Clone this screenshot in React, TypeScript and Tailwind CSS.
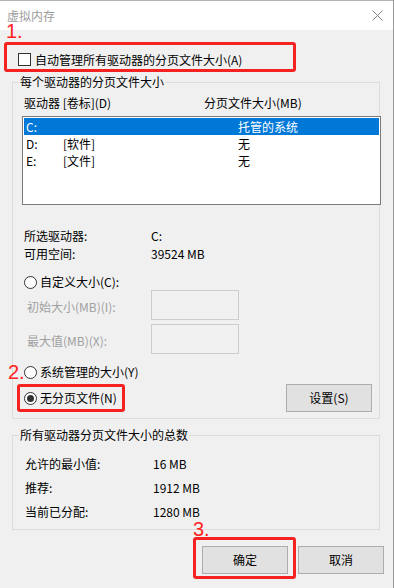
function Checkbox() {
  return <span className="block h-[13px] w-[13px] border border-[#333] bg-white" />
}

function Radio({ checked = false }: { checked?: boolean }) {
  return (
    <span className="flex h-[13px] w-[13px] items-center justify-center rounded-full border border-[#333] bg-white">
      {checked && <span className="h-[7px] w-[7px] rounded-full bg-[#333]" />}
    </span>
  )
}

function Button({ label }: { label: string }) {
  return (
    <button
      type="button"
      className="flex h-[28px] w-[86px] items-center justify-center border border-[#adadad] bg-[#e1e1e1] text-black"
    >
      {label}
    </button>
  )
}

function Legend({ label }: { label: string }) {
  return (
    <div className="-mt-[9px] h-[16px] pl-[6px]">
      <span className="bg-[#f0f0f0] px-[1px]">{label}</span>
    </div>
  )
}

const drives = [
  { letter: 'C:', label: '', size: '托管的系统', selected: true },
  { letter: 'D:', label: '[软件]', size: '无', selected: false },
  { letter: 'E:', label: '[文件]', size: '无', selected: false },
]

const totals = [
  ['允许的最小值:', '16 MB'],
  ['推荐:', '1912 MB'],
  ['当前已分配:', '1280 MB'],
]

export default function App() {
  return (
    <div className="relative h-[588px] w-[394px] overflow-hidden border-r border-[#9a9a9a] bg-[#f0f0f0] font-['Noto_Sans_CJK_SC',sans-serif] text-[12px] leading-[16px] text-black">
      {/* title bar */}
      <div className="flex h-[30px] items-center justify-between border-t border-[#b4b4b4] bg-white pl-[7px] pr-[10px]">
        <span className="leading-[14px] text-[#9b9b9b]">虚拟内存</span>
        <svg width="11" height="11" viewBox="0 0 11 11" className="text-[#808080]">
          <path d="M0.5 0.5L10.5 10.5M10.5 0.5L0.5 10.5" stroke="currentColor" strokeWidth="1" />
        </svg>
      </div>

      <div className="ml-[18px] mt-[23px] flex h-[13px] items-center gap-[4px]">
        <Checkbox />
        <span>自动管理所有驱动器的分页文件大小(A)</span>
      </div>

      {/* per-drive group */}
      <div className="ml-[12px] mt-[16px] w-[368px] border border-[#dcdcdc] pb-[6px]">
        <Legend label="每个驱动器的分页文件大小" />
        <div className="mt-[5px] flex h-[16px] pl-[11px]">
          <span className="w-[180px]">驱动器 [卷标](D)</span>
          <span>分页文件大小(MB)</span>
        </div>
        <div className="ml-[9px] mt-[5px] h-[89px] w-[359px] border border-[#7a7a7a] bg-white p-[1px]">
          {drives.map((d) => (
            <div
              key={d.letter}
              className={
                d.selected
                  ? 'flex h-[17px] items-center bg-[#0078d7] pl-[2px] text-white'
                  : 'flex h-[17px] items-center pl-[2px]'
              }
            >
              <span className="w-[37px]">{d.letter}</span>
              <span className="w-[175px]">{d.label}</span>
              <span>{d.size}</span>
            </div>
          ))}
        </div>

        <div className="mt-[22px] pl-[11px]">
          <div className="flex h-[18px] items-center">
            <span className="w-[127px]">所选驱动器:</span>
            <span>C:</span>
          </div>
          <div className="flex h-[18px] items-center">
            <span className="w-[127px]">可用空间:</span>
            <span>39524 MB</span>
          </div>
        </div>

        <div className="mt-[11px] flex h-[16px] items-center gap-[3px] pl-[11px]">
          <Radio />
          <span>自定义大小(C):</span>
        </div>
        <div className="flex h-[30px] items-center pl-[14px] text-[#a0a0a0]">
          <span className="w-[124px] pt-[3px]">初始大小(MB)(I):</span>
          <span className="h-[30px] w-[88px] border border-[#cccccc]" />
        </div>
        <div className="mt-[4px] flex h-[30px] items-center pl-[14px] text-[#a0a0a0]">
          <span className="w-[124px] pt-[3px]">最大值(MB)(X):</span>
          <span className="h-[30px] w-[88px] border border-[#cccccc]" />
        </div>

        <div className="mt-[10px] flex h-[16px] items-center gap-[3px] pl-[11px]">
          <Radio />
          <span>系统管理的大小(Y)</span>
        </div>
        <div className="mt-[4px] flex h-[28px] items-center justify-between pl-[11px] pr-[7px]">
          <div className="flex items-center gap-[3px]">
            <Radio checked />
            <span>无分页文件(N)</span>
          </div>
          <Button label="设置(S)" />
        </div>
      </div>

      {/* totals group */}
      <div className="ml-[12px] mt-[16px] w-[368px] border border-[#dcdcdc] pb-[5px]">
        <Legend label="所有驱动器分页文件大小的总数" />
        <div className="mt-[9px] pl-[12px]">
          {totals.map(([k, v]) => (
            <div key={k} className="flex h-[24px] items-center">
              <span className="w-[128px]">{k}</span>
              <span>{v}</span>
            </div>
          ))}
        </div>
      </div>

      <div className="mt-[16px] flex justify-end gap-[10px] pr-[9px]">
        <Button label="确定" />
        <Button label="取消" />
      </div>

      {/* red annotations laid over the dialog */}
      <span className="absolute left-[6px] top-[24px] font-['Liberation_Sans',sans-serif] text-[20px] leading-[15px] text-[#ff2121]">1.</span>
      <span className="absolute left-[4px] top-[42px] h-[30px] w-[292px] rounded-[3px] border-[3px] border-[#f52222]" />
      <span className="absolute left-[8px] top-[365px] font-['Liberation_Sans',sans-serif] text-[20px] leading-[15px] text-[#ff2121]">2.</span>
      <span className="absolute left-[17px] top-[384px] h-[28px] w-[108px] rounded-[3px] border-[3px] border-[#f52222]" />
      <span className="absolute left-[193px] top-[522px] font-['Liberation_Sans',sans-serif] text-[20px] leading-[15px] text-[#ff2121]">3.</span>
      <span className="absolute left-[193px] top-[537px] h-[42px] w-[103px] rounded-[3px] border-[3px] border-[#f52222]" />
    </div>
  )
}
